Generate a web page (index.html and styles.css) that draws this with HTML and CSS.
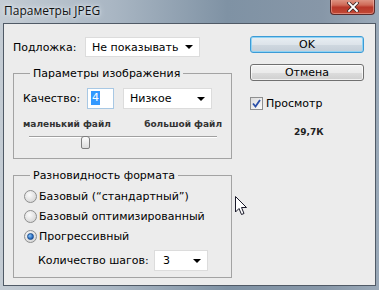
FILE: index.html
```html
<!DOCTYPE html>
<html lang="ru">

<head>
    <meta charset="UTF-8">
    <title>Параметры JPEG</title>
    <link rel="stylesheet" href="styles.css">
</head>

<body>
    <div class="window">
        <!-- Title bar -->
        <div class="titlebar">
            <span class="title">Параметры JPEG</span>
            <div class="close">
                <svg width="12" height="10" viewBox="0 0 12 10">
                    <path d="M2 1 L10 9 M10 1 L2 9" stroke="#3a2a2a" stroke-width="3.4" stroke-linecap="square"/>
                    <path d="M2 1 L10 9 M10 1 L2 9" stroke="#fff" stroke-width="1.8" stroke-linecap="square"/>
                </svg>
            </div>
        </div>

        <!-- Dialog body -->
        <div class="client">
            <div class="left">
                <div class="row matte-row">
                    <span class="lbl lbl-matte">Подложка:</span>
                    <div class="select sel-matte"><span>Не показывать</span><i class="arrow"></i></div>
                </div>

                <fieldset class="group group-image">
                    <legend>Параметры изображения</legend>
                    <div class="row quality-row">
                        <span class="lbl lbl-quality">Качество:</span>
                        <div class="input-box"><span class="hl">4</span></div>
                        <div class="select sel-quality"><span>Низкое</span><i class="arrow"></i></div>
                    </div>
                    <div class="scale">
                        <span>маленький файл</span>
                        <span>большой файл</span>
                    </div>
                    <div class="slider">
                        <div class="track"></div>
                        <div class="thumb"></div>
                    </div>
                </fieldset>

                <fieldset class="group group-format">
                    <legend>Разновидность формата</legend>
                    <label class="radio-row"><span class="radio"></span>Базовый (“стандартный”)</label>
                    <label class="radio-row"><span class="radio"></span>Базовый оптимизированный</label>
                    <label class="radio-row"><span class="radio on"></span>Прогрессивный</label>
                    <div class="row steps-row">
                        <span class="lbl lbl-steps">Количество шагов:</span>
                        <div class="select sel-steps"><span>3</span><i class="arrow"></i></div>
                    </div>
                </fieldset>
            </div>

            <div class="right">
                <button class="btn btn-ok">OK</button>
                <button class="btn btn-cancel">Отмена</button>
                <label class="check">
                    <span class="box">
                        <svg width="9" height="9" viewBox="0 0 9 9">
                            <path d="M1 4.5 L3.5 7.5 L8 1" fill="none" stroke="#2a4fa8" stroke-width="1.8"/>
                        </svg>
                    </span>
                    Просмотр
                </label>
                <div class="size">29,7К</div>
            </div>
        </div>

        <!-- Mouse pointer -->
        <svg class="cursor" width="13" height="20" viewBox="0 0 13 20">
            <path d="M0.5 0.5 L0.5 16 L4 12.5 L6.5 18.5 L9 17.5 L6.5 11.5 L11.5 11.5 Z" fill="#fff" stroke="#1a1a2a" stroke-width="1"/>
        </svg>
    </div>
</body>

</html>
```

FILE: styles.css
```css
/* Global reset */
* {
    box-sizing: border-box;
    margin: 0;
    padding: 0;
}

html,
body {
    width: 379px;
    height: 290px;
    overflow: hidden;
    background: #8a9bad;
}

/* Window frame */
.window {
    position: relative;
    width: 379px;
    height: 290px;
    display: flex;
    flex-direction: column;
    padding: 0 3px 4px 3px;
    background: linear-gradient(90deg, #c4ccd4 0%, #a9b6c3 30%, #7f92a4 60%, #8797a8 85%, #9aa9b8 100%);
    font-family: "DejaVu Sans", Tahoma, sans-serif;
    font-size: 11px;
    color: #000;
}

.titlebar {
    height: 23px;
    display: flex;
    align-items: flex-start;
    justify-content: space-between;
}

.title {
    font-family: "Open Sans", "Noto Sans", sans-serif;
    font-size: 12px;
    line-height: 14px;
    padding: 4px 0 0 1px;
    color: #111;
    text-shadow: 0 0 6px #e8eef4, 0 0 3px #e8eef4;
}

.close {
    width: 45px;
    height: 16px;
    margin: -1px 1px 0 0;
    border: 1px solid #5b2b2b;
    border-top: none;
    border-radius: 0 0 4px 4px;
    background: linear-gradient(#e09a8a 0%, #cf6a58 40%, #b8372a 55%, #c24a36 100%);
    box-shadow: inset 0 0 0 1px rgba(255, 200, 190, .45);
    display: flex;
    align-items: center;
    justify-content: center;
}

/* Client area */
.client {
    flex: 1;
    display: flex;
    gap: 18px;
    padding: 12px 0 0 9px;
    background: #ececec;
    border: 1px solid #505a66;
}

.left {
    width: 219px;
    display: flex;
    flex-direction: column;
}

.row {
    display: flex;
    align-items: center;
}

.lbl {
    line-height: 13px;
}

.matte-row {
    margin-top: 1px;
    height: 20px;
}

.lbl-matte {
    width: 72px;
}

/* Drop-down lists */
.select {
    display: flex;
    align-items: center;
    justify-content: space-between;
    height: 100%;
    background: #fff;
    border: 1px solid #dcdcdc;
    padding: 0 6px 0 6px;
}

.arrow {
    width: 0;
    height: 0;
    border-left: 4px solid transparent;
    border-right: 4px solid transparent;
    border-top: 4px solid #000;
}

.sel-matte {
    width: 115px;
}

/* Group boxes */
.group {
    border: 1px solid #a3a3a3;
    padding: 0 8px 8px 9px;
    min-width: 0;
}

.group legend {
    margin-left: 7px;
    padding: 0 3px;
    line-height: 13px;
}

.group-image {
    margin-top: 10px;
}

.quality-row {
    margin-top: 8px;
    height: 21px;
}

.lbl-quality {
    width: 64px;
}

.input-box {
    width: 27px;
    height: 100%;
    background: #fff;
    border: 1px solid #a8c8e4;
    padding: 2px 0 0 3px;
}

.hl {
    display: inline-block;
    background: #3399ff;
    color: #fff;
    line-height: 14px;
    padding: 0 1px;
}

.sel-quality {
    width: 89px;
    margin-left: 9px;
}

.scale {
    margin-top: 9px;
    display: flex;
    justify-content: space-between;
    font-size: 9px;
    line-height: 12px;
    font-weight: bold;
    color: #333;
    padding-right: 1px;
}

.slider {
    position: relative;
    margin: 3px 0 0 6px;
    width: 188px;
    height: 14px;
}

.track {
    margin-top: 6px;
    height: 2px;
    border-top: 1px solid #a0a0a0;
    border-bottom: 1px solid #fff;
}

.thumb {
    position: absolute;
    left: 52px;
    top: 0;
    width: 9px;
    height: 13px;
    border: 1px solid #7e7e7e;
    border-radius: 3px 3px 2px 2px;
    background: linear-gradient(#fdfdfd, #dcdcdc);
}

.group-format {
    margin-top: 10px;
    padding-top: 4px;
    padding-bottom: 6px;
}

.radio-row {
    display: flex;
    align-items: center;
    height: 20px;
    gap: 2px;
}

.radio {
    width: 13px;
    height: 13px;
    margin-left: 1px;
    border-radius: 50%;
    border: 1px solid #8e8f8f;
    background: radial-gradient(circle at 40% 35%, #fbfbfb 0%, #e0e0e0 60%, #cacaca 100%);
    display: flex;
    align-items: center;
    justify-content: center;
}

.radio.on::after {
    content: "";
    width: 5px;
    height: 5px;
    border-radius: 50%;
    background: radial-gradient(circle at 35% 35%, #8cc4f4 0%, #2a6fc4 60%, #1a3f80 100%);
    border: 1px solid #1d4f90;
}

.steps-row {
    margin-top: 4px;
    height: 21px;
    padding-left: 15px;
}

.lbl-steps {
    width: 116px;
}

.sel-steps {
    width: 54px;
    padding-left: 8px;
}

/* Right column */
.right {
    width: 114px;
    display: flex;
    flex-direction: column;
}

.btn {
    height: 17px;
    font-family: "DejaVu Sans", Tahoma, sans-serif;
    font-size: 11px;
    line-height: 13px;
    color: #000;
    border: 1px solid #707070;
    border-radius: 3px;
    background: linear-gradient(#f2f2f2 0%, #ebebeb 50%, #dddddd 51%, #cfcfcf 100%);
    box-shadow: inset 0 0 0 1px rgba(255, 255, 255, .7);
}

.btn-ok {
    border-color: #3c9bd6;
    background: linear-gradient(#e8eef3 0%, #dde4ea 50%, #cfd8e0 51%, #c4ced7 100%);
    box-shadow: inset 0 0 0 1px #8fd3f4;
}

.btn-cancel {
    margin-top: 11px;
}

.check {
    margin-top: 16px;
    display: flex;
    align-items: center;
    gap: 3px;
    line-height: 13px;
}

.box {
    width: 13px;
    height: 13px;
    border: 1px solid #8e8f8f;
    background: linear-gradient(135deg, #dcdcdc, #fbfbfb);
    display: flex;
    align-items: center;
    justify-content: center;
}

.size {
    margin: 16px 0 0 44px;
    font-size: 9px;
    line-height: 12px;
    font-weight: bold;
    color: #222;
}

.cursor {
    position: absolute;
    left: 235px;
    top: 196px;
}
```
